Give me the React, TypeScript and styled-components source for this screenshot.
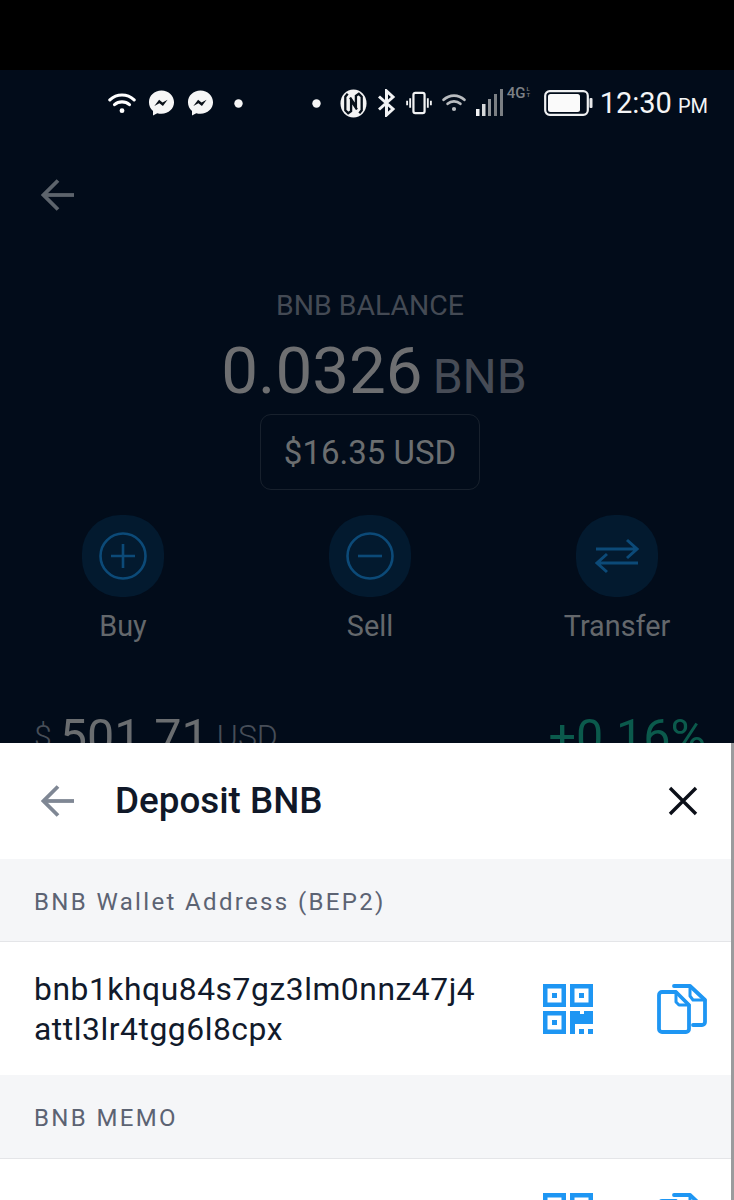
import React from "react";
import styled, { createGlobalStyle } from "styled-components";

const Global = createGlobalStyle`
  html, body { margin: 0; padding: 0; background: #000; }
  body { font-family: Roboto, "Liberation Sans", sans-serif; }
`;

const Page = styled.div`
  width: 734px;
  height: 1200px;
  display: flex;
  flex-direction: column;
  overflow: hidden;
`;
const TopBar = styled.div`
  height: 70px;
  flex: none;
  background: #000;
`;
const Screen = styled.div`
  height: 673px;
  flex: none;
  background: #020c1a;
  overflow: hidden;
  display: flex;
  flex-direction: column;
  > * {
    flex: none;
  }
`;
const StatusBar = styled.div`
  height: 66px;
  display: flex;
  align-items: center;
  padding-left: 108px;
  padding-right: 26px;
  color: #fff;
`;
const LeftIcons = styled.div`
  display: flex;
  align-items: center;
  gap: 12px;
`;
const RightIcons = styled.div`
  display: flex;
  align-items: center;
  gap: 10px;
`;
const Spacer = styled.div`
  flex: 1;
`;
const LeftDot = styled.div`
  display: flex;
  margin-left: 8px;
`;
const RightDot = styled.div`
  display: flex;
  margin-right: 9px;
`;
const Clock = styled.div`
  font-size: 29px;
  color: #f4f5f6;
  margin-left: 7px;
  white-space: nowrap;
  span {
    font-size: 20px;
    margin-left: 6px;
  }
`;
const Nav = styled.div`
  height: 60px;
  margin-top: 29px;
  padding-left: 41px;
  display: flex;
  align-items: center;
`;
const Balance = styled.div`
  margin-top: 66px;
  padding-left: 6px;
  display: flex;
  flex-direction: column;
  align-items: center;
`;
const BalanceLabel = styled.div`
  font-size: 28.4px;
  line-height: 30px;
  color: #444a54;
`;
const Amount = styled.div`
  display: flex;
  align-items: baseline;
  gap: 10px;
  height: 78px;
  line-height: 78px;
  margin-top: 11px;
  margin-left: 8px;
  font-size: 65.5px;
  color: #6e6f71;
  small {
    font-size: 48px;
    color: #474c56;
  }
`;
const UsdBox = styled.div`
  margin-top: 4px;
  width: 220px;
  height: 76px;
  box-sizing: border-box;
  border: 1.5px solid #18212d;
  border-radius: 11px;
  display: flex;
  align-items: center;
  justify-content: center;
  font-size: 33px;
  color: #6b6e70;
`;
const Actions = styled.div`
  margin-top: 25px;
  padding: 0 58px 0 64px;
  display: flex;
  justify-content: space-between;
`;
const Action = styled.div`
  width: 118px;
  display: flex;
  flex-direction: column;
  align-items: center;
  gap: 11px;
`;
const ActionIcon = styled.div`
  width: 82px;
  height: 82px;
  border-radius: 38px;
  background: #031a2f;
  display: flex;
  align-items: center;
  justify-content: center;
`;
const ActionLabel = styled.div`
  font-size: 28.8px;
  line-height: 36px;
  color: #64686c;
  white-space: nowrap;
`;
const Ticker = styled.div`
  margin-top: 65px;
  padding: 0 28px 0 34px;
  display: flex;
  justify-content: space-between;
  align-items: baseline;
  line-height: 56px;
`;
const Price = styled.div`
  font-size: 48.5px;
  color: #6a6d70;
  display: flex;
  align-items: baseline;
  gap: 8px;
  i {
    font-style: normal;
    font-size: 32px;
    color: #474e58;
    font-weight: 300;
    transform: translateY(-6px);
  }
  b {
    font-weight: 400;
  }
`;
const Change = styled.div`
  font-size: 48.5px;
  color: #0b5a4c;
`;

const Sheet = styled.div`
  flex: 1;
  min-height: 0;
  background: #fff;
  border-right: 3px solid #9a9b9d;
  overflow: hidden;
`;
const SheetHeader = styled.div`
  height: 116px;
  padding: 0 33px 0 41px;
  display: flex;
  align-items: center;
`;
const SheetTitle = styled.div`
  font-size: 36.8px;
  font-weight: 500;
  color: #101828;
  margin: -2px 0 0 40px;
  flex: 1;
`;
const SectionLabel = styled.div<{ $h: number }>`
  height: ${(p) => p.$h}px;
  box-sizing: border-box;
  background: #f5f6f8;
  border-bottom: 1px solid #e4e5e8;
  padding: 3px 0 0 34px;
  display: flex;
  align-items: center;
  font-size: 24px;
  letter-spacing: 2.35px;
  color: #5c6373;
`;
const AddressRow = styled.div<{ $h: number }>`
  height: ${(p) => p.$h}px;
  padding: 0 24px 0 34px;
  display: flex;
  align-items: center;
`;
const Address = styled.div`
  flex: 1;
  font-size: 31.8px;
  line-height: 40px;
  padding-top: 1px;
  color: #111a2b;
  letter-spacing: 0.55px;
`;
const IconGroup = styled.div`
  display: flex;
  align-items: center;
  gap: 64px;
`;
const NetText = styled.span`
  width: 27px;
  display: flex;
  align-self: flex-start;
  margin: -3px 0 0 -6px;
  font-size: 15px;
  line-height: 14px;
  font-weight: 500;
  color: #7d8185;
`;
const NetTiny = styled.span`
  font-size: 6px;
  line-height: 6px;
  width: 6px;
  margin-left: 1px;
  word-break: break-all;
`;

const Wifi = ({ size = 28, dim = false }: { size?: number; dim?: boolean }) => (
  <svg width={size} height={size * 0.8} viewBox="0 0 30 24" fill="none" stroke={dim ? "#b9bcbf" : "#fff"} strokeWidth="3.4" strokeLinecap="round">
    <path d="M2 8.5C9.5 1.5 20.5 1.5 28 8.5" />
    <path d="M7 13.5C11.5 9.5 18.5 9.5 23 13.5" />
    <circle cx="15" cy="20" r="2.6" fill={dim ? "#b9bcbf" : "#fff"} stroke="none" />
  </svg>
);
const Messenger = () => (
  <svg width="27" height="28" viewBox="0 0 28 28">
    <path fill="#f6f6f6" d="M14 1C6.6 1 1 6.3 1 13.2c0 3.7 1.6 6.8 4.2 9V27l4.4-2.5c1.4.4 2.9.6 4.4.6 7.4 0 13-5.3 13-11.9S21.4 1 14 1z" />
    <path fill="#0a1018" d="M6.6 17.2l4.9-6.6 3.6 3 5.2-3-4.8 6.6-3.7-3-5.2 3z" />
  </svg>
);
const Dot = () => (
  <svg width="9" height="9" viewBox="0 0 9 9">
    <circle cx="4.5" cy="4.5" r="4.2" fill="#f6f6f6" />
  </svg>
);
const Nfc = () => (
  <svg width="27" height="29" viewBox="0 0 28 30">
    <ellipse cx="14" cy="15" rx="13.5" ry="14.5" fill="#f4f4f4" />
    <path fill="none" stroke="#07101a" strokeWidth="2.4" d="M8 5L5.5 8v14l3 3 3-2V12l6 9" />
    <path fill="none" stroke="#07101a" strokeWidth="2.4" d="M20 25l2.5-3V8l-3-3-3 2v11l-6-9" />
  </svg>
);
const Bluetooth = () => (
  <svg width="19" height="28" viewBox="0 0 19 28" fill="none" stroke="#f2f3f4" strokeWidth="3">
    <path d="M2 7.5L16 20 9.5 26V2l6.5 6L2 20.5" />
  </svg>
);
const Vibrate = () => (
  <svg width="26" height="26" viewBox="0 0 28 26" fill="none" stroke="#f2f3f4">
    <rect x="8" y="2" width="12" height="22" rx="2" strokeWidth="2.4" />
    <path d="M4.5 8v10M1.2 10.5v5M23.5 8v10M26.8 10.5v5" strokeWidth="2" />
  </svg>
);
const Signal = () => (
  <svg width="27" height="28" viewBox="0 0 27 28">
    <rect x="0" y="20" width="3.5" height="7" fill="#f2f3f4" />
    <rect x="6" y="15" width="3.5" height="12" fill="#d6d8da" />
    <rect x="12" y="10" width="3" height="17" fill="#8e9296" />
    <rect x="18" y="5" width="3" height="22" fill="#7b7f83" />
    <rect x="24" y="0" width="3" height="27" fill="#7b7f83" />
  </svg>
);
const Battery = () => (
  <svg width="49" height="26" viewBox="0 0 49 26">
    <rect x="1.2" y="1.2" width="42.6" height="23.6" rx="4.5" fill="none" stroke="#f0f1f2" strokeWidth="2.2" />
    <rect x="4" y="4" width="32" height="18" rx="2.5" fill="#fafafa" />
    <rect x="45.5" y="8" width="3" height="10" rx="1" fill="#e6e7e8" />
  </svg>
);
const BackArrow = ({ color }: { color: string }) => (
  <svg width="34" height="32" viewBox="0 0 34 32" fill="none" stroke={color} strokeWidth="3.8">
    <path d="M33 16H3" />
    <path d="M17 1.5L2.5 16 17 30.5" />
  </svg>
);
const Plus = () => (
  <svg width="48" height="48" viewBox="0 0 48 48" fill="none" stroke="#0c4a78" strokeWidth="2.6">
    <circle cx="24" cy="24" r="22.5" />
    <path d="M24 12v24M12 24h24" />
  </svg>
);
const Minus = () => (
  <svg width="48" height="48" viewBox="0 0 48 48" fill="none" stroke="#0c4a78" strokeWidth="2.6">
    <circle cx="24" cy="24" r="22.5" />
    <path d="M12 24h24" />
  </svg>
);
const Swap = () => (
  <svg width="44" height="36" viewBox="0 0 44 36" fill="none" stroke="#0c4a78" strokeWidth="3">
    <path d="M1 11h41M32 2l10 9-10 9" />
    <path d="M43 25H2M12 16L2 25l10 9" />
  </svg>
);
const Close = () => (
  <svg width="30" height="30" viewBox="0 0 30 30" fill="none" stroke="#0b0f18" strokeWidth="3.4">
    <path d="M2 2l26 26M28 2L2 28" />
  </svg>
);
const Qr = () => (
  <svg width="50" height="50" viewBox="0 0 50 50" fill="#1e96f3">
    <path fillRule="evenodd" d="M0 0h23v23H0zM4.5 4.5v14h14v-14zM27 0h23v23H27zM31.5 4.5v14h14v-14zM0 27h23v23H0zM4.5 31.5v14h14v-14z" />
    <rect x="9" y="9" width="5" height="5" />
    <rect x="36" y="9" width="5" height="5" />
    <rect x="9" y="36" width="5" height="5" />
    <path d="M27 27h10v3h4v-3h9v13H32v10h-5z" />
    <rect x="36" y="45" width="5" height="5" />
    <rect x="45" y="45" width="5" height="5" />
  </svg>
);
const Copy = () => (
  <svg width="50" height="50" viewBox="0 0 50 50" fill="none" stroke="#1e96f3" strokeWidth="3.8" strokeLinejoin="round" strokeLinecap="round">
    <path d="M17 2h16l15 14v22a3 3 0 0 1-3 3h-9" />
    <path d="M33 2v10l3 4h12" strokeWidth="3" />
    <path d="M5 8h14l13 13v24a3 3 0 0 1-3 3H5a3 3 0 0 1-3-3V11a3 3 0 0 1 3-3z" fill="#fff" />
    <path d="M19 8v10l3 3h10" strokeWidth="3" />
  </svg>
);

export default function App() {
  return (
    <Page>
      <Global />
      <TopBar />
      <Screen>
        <StatusBar>
          <LeftIcons>
            <Wifi />
            <Messenger />
            <Messenger />
            <LeftDot>
              <Dot />
            </LeftDot>
          </LeftIcons>
          <Spacer />
          <RightIcons>
            <RightDot>
              <Dot />
            </RightDot>
            <Nfc />
            <Bluetooth />
            <Vibrate />
            <Wifi size={24} dim />
            <Signal />
            <NetText>
              4G<NetTiny>LT</NetTiny>
            </NetText>
            <Battery />
          </RightIcons>
          <Clock>
            12:30<span>PM</span>
          </Clock>
        </StatusBar>
        <Nav>
          <BackArrow color="#5d646c" />
        </Nav>
        <Balance>
          <BalanceLabel>BNB BALANCE</BalanceLabel>
          <Amount>
            0.0326<small>BNB</small>
          </Amount>
          <UsdBox>$16.35 USD</UsdBox>
        </Balance>
        <Actions>
          <Action>
            <ActionIcon>
              <Plus />
            </ActionIcon>
            <ActionLabel>Buy</ActionLabel>
          </Action>
          <Action>
            <ActionIcon>
              <Minus />
            </ActionIcon>
            <ActionLabel>Sell</ActionLabel>
          </Action>
          <Action>
            <ActionIcon>
              <Swap />
            </ActionIcon>
            <ActionLabel>Transfer</ActionLabel>
          </Action>
        </Actions>
        <Ticker>
          <Price>
            <i>$</i>
            <b>501.71</b>
            <i>USD</i>
          </Price>
          <Change>+0.16%</Change>
        </Ticker>
      </Screen>
      <Sheet>
        <SheetHeader>
          <BackArrow color="#7f8794" />
          <SheetTitle>Deposit BNB</SheetTitle>
          <Close />
        </SheetHeader>
        <SectionLabel $h={83}>BNB Wallet Address (BEP2)</SectionLabel>
        <AddressRow $h={133}>
          <Address>
            bnb1khqu84s7gz3lm0nnz47j4
            <br />
            attl3lr4tgg6l8cpx
          </Address>
          <IconGroup>
            <Qr />
            <Copy />
          </IconGroup>
        </AddressRow>
        <SectionLabel $h={84}>BNB MEMO</SectionLabel>
        <AddressRow $h={117}>
          <Address />
          <IconGroup>
            <Qr />
            <Copy />
          </IconGroup>
        </AddressRow>
      </Sheet>
    </Page>
  );
}
